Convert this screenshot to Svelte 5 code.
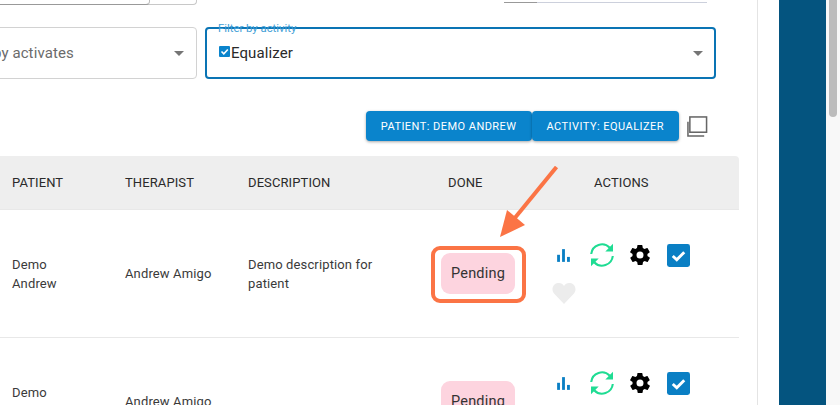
<script lang="ts">
  const rows = [
    { patient: ['Demo', 'Andrew'], therapist: 'Andrew Amigo', description: 'Demo description for patient', status: 'Pending' },
    { patient: ['Demo', 'Andrew'], therapist: 'Andrew Amigo', description: '', status: 'Pending' },
  ];
</script>

<div class="page">
  <main class="content">
    <div class="top-row">
      <div class="date-stub"><span class="date-stub__inner"></span></div>
      <div class="range-stub"><span class="range-stub__dark"></span></div>
    </div>

    <div class="filters">
      <div class="select">
        <span class="select__placeholder">Filter by activates</span>
        <span class="select__caret"></span>
      </div>
      <div class="select select--focused">
        <span class="select__label">Filter by activity</span>
        <span class="select__value">
          <svg class="select__check" viewBox="0 0 12 12">
            <rect width="11" height="11" rx="1" fill="#0a84cc" />
            <path d="M2.5 5.5l2.3 2.3 4-4.3" fill="none" stroke="#fff" stroke-width="1.6" />
          </svg>Equalizer
        </span>
        <span class="select__caret"></span>
      </div>
    </div>

    <div class="toolbar">
      <button class="chip-btn">Patient: Demo Andrew</button>
      <button class="chip-btn">Activity: Equalizer</button>
      <svg class="copy-icon" viewBox="0 0 22 22" fill="none" stroke="#666" stroke-width="1.6">
        <rect x="3" y="1" width="17.500" height="16" />
        <path d="M1 6v15h17" />
      </svg>
    </div>

    <table class="table">
      <colgroup>
        <col style="width: 113px" />
        <col style="width: 123px" />
        <col style="width: 193px" />
        <col style="width: 114px" />
        <col />
      </colgroup>
      <thead>
        <tr>
          <th>Patient</th>
          <th>Therapist</th>
          <th>Description</th>
          <th class="table__done">Done</th>
          <th class="table__actions">Actions</th>
        </tr>
      </thead>
      <tbody>
        {#each rows as row}
          <tr>
            <td>{row.patient[0]}<br />{row.patient[1]}</td>
            <td>{row.therapist}</td>
            <td class="table__desc">{row.description}</td>
            <td><span class="status">{row.status}</span></td>
            <td class="table__icons">
              <div class="actions">
                <svg class="act act--bars" viewBox="0 0 24 24" fill="#0a7fc4">
                  <rect x="3" y="11" width="4" height="10" />
                  <rect x="10" y="3" width="4" height="18" />
                  <rect x="17" y="14" width="4" height="7" />
                </svg>
                <svg class="act act--sync" viewBox="0 0 24 24" fill="none" stroke="#1fdc93" stroke-width="2.100">
                  <path d="M1.200 11A10.800 10.800 0 0 1 19.800 4.800" />
                  <path d="M22.800 13A10.800 10.800 0 0 1 4.200 19.200" />
                  <path d="M23 .8V8.500h-7.700z" fill="#1fdc93" stroke="none" />
                  <path d="M1 23.200V15.500h7.700z" fill="#1fdc93" stroke="none" />
                </svg>
                <svg class="act act--gear" viewBox="0 0 24 24" fill="#000">
                  <path d="M19.400 13c.1-.3.1-.7.1-1s0-.7-.1-1l2.100-1.600c.2-.2.2-.4.1-.6l-2-3.500c-.1-.2-.4-.3-.6-.2l-2.500 1c-.5-.4-1.100-.7-1.700-1l-.4-2.600c0-.3-.2-.5-.5-.5h-4c-.3 0-.5.2-.5.4l-.4 2.700c-.6.3-1.200.6-1.700 1l-2.500-1c-.2-.1-.5 0-.6.2l-2 3.500c-.1.2-.1.5.1.6L4.600 11c-.1.3-.1.7-.1 1s0 .7.1 1l-2.100 1.600c-.2.2-.2.4-.1.6l2 3.500c.1.2.4.3.6.2l2.500-1c.5.4 1.100.7 1.700 1l.4 2.600c0 .3.2.5.5.5h4c.3 0 .5-.2.5-.4l.4-2.700c.6-.3 1.200-.6 1.700-1l2.500 1c.2.1.5 0 .6-.2l2-3.500c.1-.2.1-.5-.1-.6zM12 15.500a3.500 3.500 0 1 1 0-7 3.500 3.500 0 0 1 0 7z" />
                </svg>
                <svg class="act act--check" viewBox="0 0 24 24">
                  <rect width="24" height="24" rx="2.500" fill="#0a7fc4" />
                  <path d="M6 12.500l4.200 4L18 8.500" fill="none" stroke="#fff" stroke-width="3" />
                </svg>
                <svg class="act act--heart" viewBox="0 0 24 24" fill="#ececec">
                  <path d="M12 23 2 12.500C-.8 9.300.2 3 6 2c2.700-.4 4.800 1 6 3 1.200-2 3.300-3.400 6-3 5.800 1 6.800 7.300 4 10.500z" />
                </svg>
              </div>
            </td>
          </tr>
        {/each}
      </tbody>
    </table>

    <div class="highlight"></div>
    <svg class="arrow" viewBox="0 0 70 80">
      <path d="M56.500 1 L14 53" stroke="#fb7445" stroke-width="4" fill="none" />
      <path d="M0 71 L7 44 L25 59 Z" fill="#fb7445" />
    </svg>
  </main>

  <div class="gutter"></div>
  <div class="band"></div>
  <div class="scrollbar"><span class="scrollbar__thumb"></span></div>
</div>

<style>
  :global(body) {
    margin: 0;
    background: #fff;
  }

  .page {
    display: flex;
    font-family: Roboto, "Liberation Sans", sans-serif;
    height: 405px;
    overflow: hidden;
    width: 840px;
  }

  .content {
    border-right: 1px solid #e4e4e4;
    box-sizing: border-box;
    flex: 0 0 758px;
    min-width: 0;
    position: relative;
  }

  .top-row {
    display: flex;
    height: 27px;
    justify-content: space-between;
    padding-right: 50px;
  }

  .date-stub {
    border: 1px solid #c8c8c8;
    border-radius: 0 0 4px 4px;
    border-top: 0;
    box-sizing: border-box;
    height: 5px;
    margin-left: -20px;
    width: 217px;
  }

  .date-stub__inner {
    border-bottom: 1px solid #999;
    border-right: 1px solid #bbb;
    border-radius: 0 0 4px 0;
    display: block;
    height: 4px;
    width: 168px;
  }

  .range-stub {
    border-bottom: 1px solid #ccd0dc;
    height: 2px;
    width: 203px;
  }

  .range-stub__dark {
    border-bottom: 1px solid #999;
    display: block;
    height: 2px;
    width: 33px;
  }

  .filters {
    display: flex;
    gap: 8px;
    margin-left: -60px;
    padding-right: 41px;
  }

  .select {
    align-items: center;
    border: 1px solid #d2d2d2;
    border-radius: 4px;
    box-sizing: border-box;
    display: flex;
    flex: 0 0 257px;
    height: 52px;
    justify-content: space-between;
    padding: 0 12px 0 14px;
    position: relative;
  }

  .select--focused {
    border: 2px solid #0a74b4;
    flex: 1;
    padding: 0 11px 0 12px;
  }

  .select__placeholder {
    color: #6b6b6b;
    font-size: 15px;
    letter-spacing: 0.1px;
  }

  .select__label {
    color: #3f9ed6;
    font-size: 11.300px;
    left: 11px;
    line-height: 11px;
    position: absolute;
    top: -6px;
  }

  .select__value {
    align-items: center;
    color: #2a2a2a;
    display: flex;
    font-size: 15px;
    letter-spacing: 0.1px;
  }

  .select__check {
    height: 12px;
    margin-bottom: 3px;
    width: 12px;
  }

  .select__caret {
    border-left: 5px solid transparent;
    border-right: 5px solid transparent;
    border-top: 5px solid #757575;
    height: 0;
    width: 0;
  }

  .toolbar {
    align-items: center;
    display: flex;
    height: 30px;
    justify-content: flex-end;
    margin-top: 32px;
    padding-right: 49px;
  }

  .chip-btn {
    background: #0a84cc;
    border: 0;
    border-radius: 4px;
    box-shadow: 0 1px 3px rgba(0, 0, 0, 0.35);
    color: #fff;
    font-family: inherit;
    font-size: 11px;
    font-weight: 400;
    height: 30px;
    letter-spacing: 0.46px;
    padding: 0 15px;
    text-transform: uppercase;
  }

  .copy-icon {
    height: 21px;
    margin-left: 8px;
    width: 21px;
  }

  .table {
    border-collapse: collapse;
    margin-top: 15px;
    table-layout: fixed;
    width: 739px;
  }

  .table th {
    background: #eee;
    color: #2a2a2a;
    font-size: 13px;
    font-weight: 400;
    height: 53px;
    letter-spacing: 0.1px;
    padding: 0 0 0 12px;
    text-align: left;
    text-transform: uppercase;
  }

  .table th:last-child {
    border-radius: 0 4px 0 0;
  }

  .table td {
    border-top: 1px solid #e8e8e8;
    border-bottom: 1px solid #e8e8e8;
    box-sizing: border-box;
    color: #3a3a3a;
    font-size: 13px;
    height: 128px;
    letter-spacing: 0.13px;
    line-height: 19px;
    padding: 0 0 0 12px;
  }

  .table td.table__desc {
    padding-right: 48px;
  }

  .table th.table__done {
    padding-left: 19px;
  }

  .table th.table__actions {
    padding-left: 51px;
  }

  .table td.table__icons {
    padding: 0;
    vertical-align: top;
  }

  .status {
    align-items: center;
    background: #fdd4df;
    border-radius: 9px;
    color: #333;
    display: inline-flex;
    font-size: 14.500px;
    height: 41px;
    justify-content: center;
    letter-spacing: 0.2px;
    width: 74px;
  }

  .actions {
    align-items: center;
    display: flex;
    flex-wrap: wrap;
    margin-top: 33px;
    width: 170px;
  }

  .act {
    flex: none;
    height: 24px;
    width: 24px;
  }

  .act--bars {
    height: 17px;
    margin: 0 18px 0 12px;
    width: 17px;
  }

  .act--sync {
    margin-right: 14px;
  }

  .act--gear {
    margin-right: 15px;
  }

  .act--check {
    height: 23px;
    width: 23px;
  }

  .act--heart {
    margin: 14px 100px 0 9px;
  }

  .highlight {
    border: 4px solid #fb7445;
    border-radius: 9px;
    box-sizing: border-box;
    height: 57px;
    left: 431px;
    position: absolute;
    top: 246px;
    width: 95px;
  }

  .arrow {
    height: 80px;
    left: 500px;
    position: absolute;
    top: 166px;
    width: 70px;
  }

  .gutter {
    flex: 0 0 21px;
  }

  .band {
    background: #04547f;
    flex: 0 0 47px;
  }

  .scrollbar {
    background: #f8f8f8;
    box-sizing: border-box;
    flex: 1;
    padding: 0 3px;
  }

  .scrollbar__thumb {
    background: #bcbcbc;
    border-radius: 0 0 8px 8px;
    display: block;
    height: 117px;
    width: 8px;
  }
</style>
